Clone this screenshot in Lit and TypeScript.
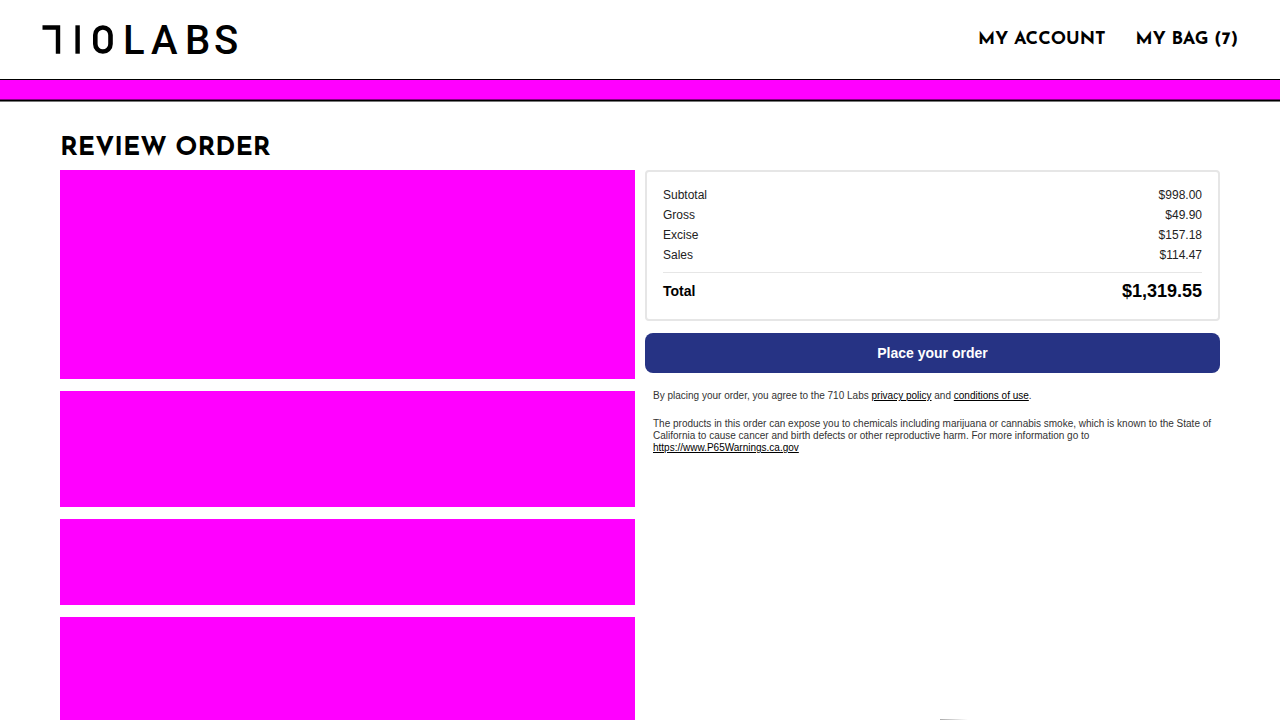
import { LitElement, html, css } from "lit";
import { customElement, property } from "lit/decorators.js";

@customElement("site-logo")
class SiteLogo extends LitElement {
  static styles = css`
    :host { display: block; }
    .logo { display: block; width: 198px; height: 30px; overflow: visible; }
    .word { font-family: Roboto, "Liberation Sans", sans-serif; font-size: 40px; font-weight: 500; }
  `;
  render() {
    return html`
      <svg class="logo" viewBox="0 0 198 30" role="img" aria-label="710 Labs">
        <path d="M0.5 3.5H16V29.7" fill="none" stroke="#000" stroke-width="4.4" />
        <rect x="33.4" y="1.3" width="4.4" height="28.4" />
        <rect x="53.3" y="3.5" width="15.2" height="24" rx="7.6" fill="none" stroke="#000" stroke-width="4.6" />
        <text class="word" x="81 109 143 172" y="29.7">LABS</text>
      </svg>
    `;
  }
}

@customElement("site-header")
class SiteHeader extends LitElement {
  @property({ type: Number }) count = 0;
  static styles = css`
    :host { display: block; font-family: "Josefin Sans", Lato, sans-serif; }
    .bar { display: flex; align-items: center; justify-content: space-between; padding: 24px 42px 25px; border-bottom: 1px solid #000; background: #fff; }
    .home { display: block; }
    .nav { display: flex; gap: 30px; }
    .link { color: #000; font-size: 18px; line-height: 26px; font-weight: 700; text-decoration: none; padding-top: 2px; }
    .banner { height: 20px; background: #f0f; border-bottom: 1px solid #000; box-shadow: inset 0 -1px #808, 0 1px #777; }
  `;
  render() {
    return html`
      <header>
        <div class="bar">
          <a class="home" href="#"><site-logo></site-logo></a>
          <nav class="nav">
            <a class="link" href="#account">MY ACCOUNT</a>
            <a class="link" href="#bag">MY BAG (${this.count})</a>
          </nav>
        </div>
        <div class="banner"></div>
      </header>
    `;
  }
}

@customElement("order-summary")
class OrderSummary extends LitElement {
  rows = [
    ["Subtotal", "$998.00"],
    ["Gross", "$49.90"],
    ["Excise", "$157.18"],
    ["Sales", "$114.47"],
  ];
  static styles = css`
    :host { display: block; color: #000; font-family: "Liberation Sans", Arial, sans-serif; }
    .card { border: 2px solid #e6e6e6; border-radius: 4px; padding: 13px 16px; }
    .totals { width: 100%; border-collapse: collapse; font-size: 12px; line-height: 20px; }
    .totals th, .totals td { padding: 0; font-weight: 400; text-align: left; color: #222; }
    .totals td { text-align: right; }
    .last th, .last td { padding-bottom: 7px; }
    .sum th, .sum td { border-top: 1px solid #e6e6e6; padding: 6px 0 3px; font-weight: 700; font-size: 14px; line-height: 24px; color: #000; vertical-align: middle; }
    .sum td { font-size: 18px; }
    .place { display: block; width: 100%; margin: 12px 0 17px; padding: 10px; border: 0; border-radius: 8px; background: #263384; color: #fff; font: 700 14px/20px "Liberation Sans", Arial, sans-serif; cursor: pointer; }
    .note { margin: 0 8px 16px; font-size: 10px; line-height: 12px; color: #333; }
    .note a { color: #000; }
  `;
  render() {
    return html`
      <div class="card">
        <table class="totals">
          <tbody>
            ${this.rows.map(
              ([name, amount], i) => html`
                <tr class=${i === this.rows.length - 1 ? "last" : ""}>
                  <th scope="row">${name}</th>
                  <td>${amount}</td>
                </tr>
              `
            )}
            <tr class="sum">
              <th scope="row">Total</th>
              <td>$1,319.55</td>
            </tr>
          </tbody>
        </table>
      </div>
      <button class="place" type="button">Place your order</button>
      <p class="note">
        By placing your order, you agree to the 710 Labs <a href="#privacy">privacy policy</a> and
        <a href="#conditions">conditions of use</a>.
      </p>
      <p class="note">
        The products in this order can expose you to chemicals including marijuana or cannabis smoke, which is known to the State of
        California to cause cancer and birth defects or other reproductive harm. For more information go to
        <a href="https://www.P65Warnings.ca.gov">https://www.P65Warnings.ca.gov</a>
      </p>
    `;
  }
}

@customElement("app-root")
class AppRoot extends LitElement {
  static styles = css`
    :host { display: block; min-height: 100vh; background: #fff; color: #000; }
    .main { height: calc(100vh - 133px); padding: 32px 60px 0; overflow: hidden; }
    .title { margin: 0 0 5px; font: 700 26px/32px "Josefin Sans", Lato, sans-serif; }
    .columns { display: grid; grid-template-columns: 1fr 1fr; gap: 10px; align-items: start; }
    .panels { display: flex; flex-direction: column; gap: 12px; }
    .panel { background: #f0f; }
    .items { height: 209px; }
    .address { height: 116px; }
    .payment { height: 86px; }
    .details { height: 160px; }
    .edge { position: fixed; right: 312px; bottom: 0; width: 28px; height: 1px; background: linear-gradient(90deg, #aaa, #fff); }
  `;
  render() {
    return html`
      <site-header .count=${7}></site-header>
      <main class="main">
        <h1 class="title">REVIEW ORDER</h1>
        <div class="columns">
          <div class="panels">
            <div class="panel items"></div>
            <div class="panel address"></div>
            <div class="panel payment"></div>
            <div class="panel details"></div>
          </div>
          <order-summary></order-summary>
        </div>
      </main>
      <div class="edge"></div>
    `;
  }
}
